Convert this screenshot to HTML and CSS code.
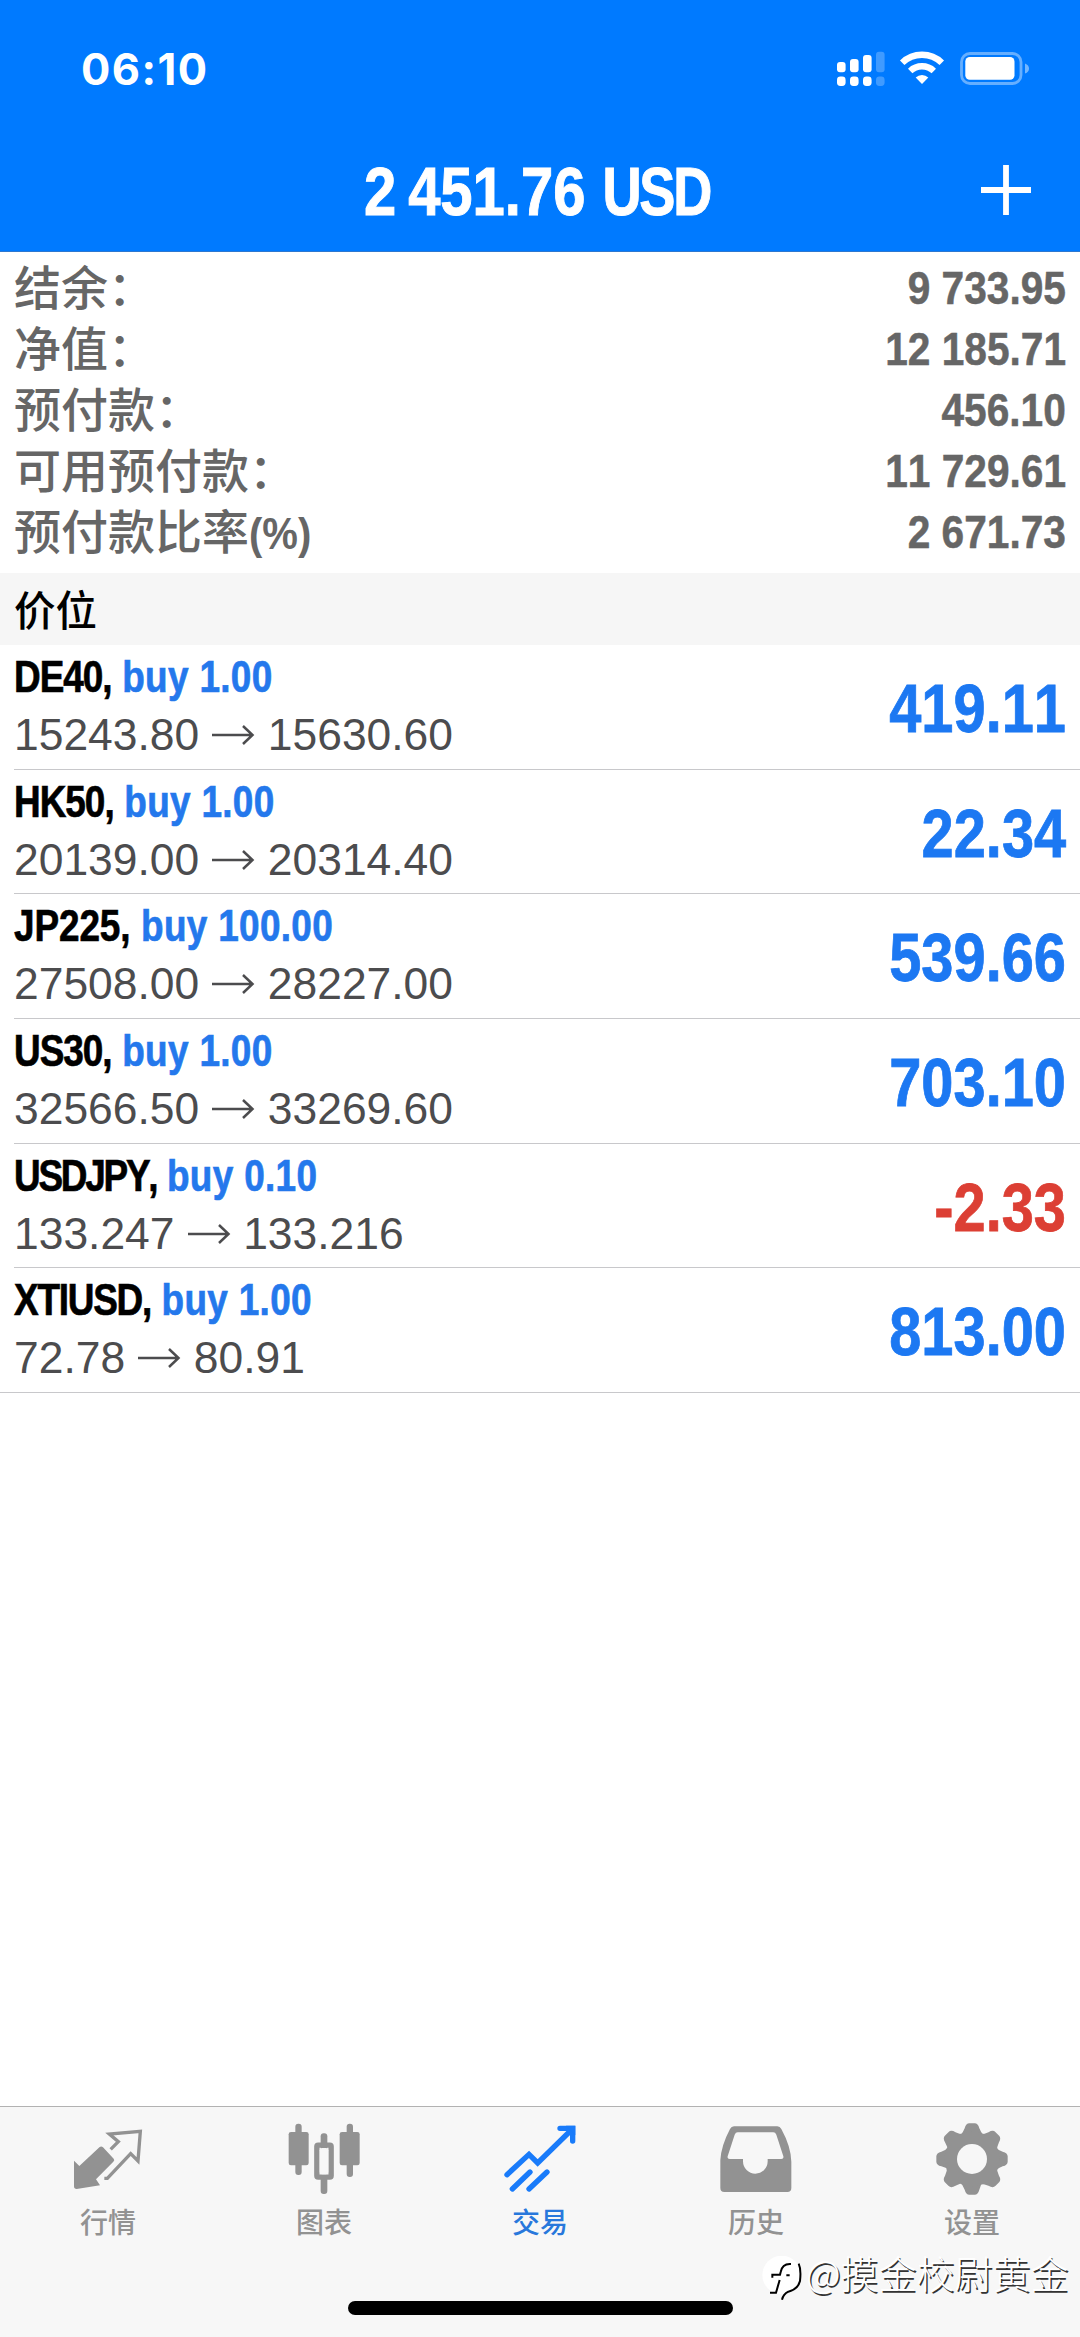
FILE: index.html
```html
<!DOCTYPE html>
<html lang="zh-CN">
<head>
<meta charset="utf-8">
<title>交易</title>
<link rel="stylesheet" href="styles.css">
</head>
<body>
<div class="screen">
  <header class="header">
    <div class="status">
      <span class="time">06:10</span>
      <svg class="status-icons" viewBox="836 50 194 38" fill="#fff">
        <rect x="837" y="62" width="8.6" height="10.3" rx="3"/>
        <rect x="850" y="59" width="8.6" height="13.3" rx="3"/>
        <rect x="863" y="55" width="8.6" height="17.3" rx="3"/>
        <rect x="876" y="51.7" width="8.6" height="20.6" rx="3" opacity=".25"/>
        <rect x="837" y="76.5" width="8.6" height="9.5" rx="3.4"/>
        <rect x="850" y="76.5" width="8.6" height="9.5" rx="3.4"/>
        <rect x="863" y="76.5" width="8.6" height="9.5" rx="3.4"/>
        <rect x="876" y="76.5" width="8.6" height="9.5" rx="3.4" opacity=".25"/>
        <path d="M902.2 62.8a28.5 28.5 0 0 1 39.6 0M910.2 71a17.2 17.2 0 0 1 23.6 0" fill="none" stroke="#fff" stroke-width="6.4"/>
        <path d="M922 84l-6.300-6.500a9 9 0 0 1 12.600 0z"/>
        <rect x="961.500" y="53.500" width="59.500" height="30" rx="8.500" fill="none" stroke="#fff" stroke-width="2.800" opacity=".4"/>
        <rect x="965.300" y="57" width="49.200" height="22.800" rx="4.500"/>
        <path d="M1025 63.500q4 1.500 4 5t-4 5z" opacity=".45"/>
      </svg>
    </div>
    <div class="titlebar">
      <h1 class="title"><span class="cond">2 451.76 <span class="usd">USD</span></span></h1>
      <svg class="plus" viewBox="0 0 50 50"><path d="M25 0v50M0 25h50" stroke="#fff" stroke-width="5.800"/></svg>
    </div>
  </header>

  <dl class="summary">
    <div class="sum-row"><dt>结余：</dt><dd>9 733.95</dd></div>
    <div class="sum-row"><dt>净值：</dt><dd>12 185.71</dd></div>
    <div class="sum-row"><dt>预付款：</dt><dd>456.10</dd></div>
    <div class="sum-row"><dt>可用预付款：</dt><dd>11 729.61</dd></div>
    <div class="sum-row"><dt>预付款比率<span class="pct">(%)</span></dt><dd>2 671.73</dd></div>
  </dl>

  <h2 class="section">价位</h2>

  <svg width="0" height="0" class="defs"><symbol id="arrow" viewBox="0 0 44 24"><path d="M1 12h40M32 3l9.500 9-9.500 9" fill="none" stroke="#4c4c4e" stroke-width="2.500"/></symbol></svg>
  <ul class="positions">
    <li class="pos">
      <div class="info"><p class="name"><b>DE40,</b> buy 1.00</p><p class="prices">15243.80 <svg class="arr"><use href="#arrow"/></svg> 15630.60</p></div>
      <span class="pl">419.11</span>
    </li>
    <li class="pos">
      <div class="info"><p class="name"><b>HK50,</b> buy 1.00</p><p class="prices">20139.00 <svg class="arr"><use href="#arrow"/></svg> 20314.40</p></div>
      <span class="pl">22.34</span>
    </li>
    <li class="pos">
      <div class="info"><p class="name"><b class="loose">JP225,</b> buy 100.00</p><p class="prices">27508.00 <svg class="arr"><use href="#arrow"/></svg> 28227.00</p></div>
      <span class="pl">539.66</span>
    </li>
    <li class="pos">
      <div class="info"><p class="name"><b>US30,</b> buy 1.00</p><p class="prices">32566.50 <svg class="arr"><use href="#arrow"/></svg> 33269.60</p></div>
      <span class="pl">703.10</span>
    </li>
    <li class="pos">
      <div class="info"><p class="name"><b class="tight">USDJPY,</b> buy 0.10</p><p class="prices">133.247 <svg class="arr"><use href="#arrow"/></svg> 133.216</p></div>
      <span class="pl loss">-2.33</span>
    </li>
    <li class="pos">
      <div class="info"><p class="name"><b class="snug">XTIUSD,</b> buy 1.00</p><p class="prices">72.78 <svg class="arr"><use href="#arrow"/></svg> 80.91</p></div>
      <span class="pl">813.00</span>
    </li>
  </ul>

  <nav class="tabs">
    <a class="tab">
      <svg viewBox="216 96 216 222">
        <path d="M222 212L238 228L299 171Q304 168 309 172L341 206Q345 211 340 215L288 268L300 286L230 297Q222 297 222 289z" fill="#929292"/>
        <path d="M332 178L355 155L328 132L421 124L414 213L392 191L322 265H313" fill="none" stroke="#929292" stroke-width="10"/>
      </svg>
      <span>行情</span>
    </a>
    <a class="tab">
      <svg viewBox="865 96 216 222" fill="#929292">
        <rect x="887" y="101" width="19" height="154" rx="9"/><rect x="867" y="126" width="60" height="100" rx="7"/>
        <rect x="1041" y="101" width="19" height="160" rx="9"/><rect x="1020" y="126" width="60" height="100" rx="7"/>
        <rect x="963" y="130" width="20" height="50" rx="9"/><rect x="963" y="255" width="20" height="57" rx="9"/>
        <rect x="951.500" y="165.500" width="43" height="96" rx="4" fill="none" stroke="#929292" stroke-width="16"/>
        <rect x="960" y="174" width="26" height="79" rx="7" fill="#f7f7f7"/>
      </svg>
      <span>图表</span>
    </a>
    <a class="tab active">
      <svg viewBox="314 96 216 222" fill="none" stroke="#197bfa" stroke-width="16" stroke-linecap="round" stroke-linejoin="miter">
        <path d="M323 254L389 193L415 219L516 120"/>
        <path d="M482 115H520V153"/>
        <path d="M500 107H528V136z" fill="#197bfa" stroke="none"/>
        <path d="M339 297L392 246M389 297L443 246"/>
      </svg>
      <span>交易</span>
    </a>
    <a class="tab">
      <svg viewBox="962 96 216 222">
        <path fill="#929292" fill-rule="evenodd" d="M1004 109H1134Q1142 109 1146 117Q1175 170 1176 215V294Q1176 306 1164 306H975Q963 306 963 294V210Q966 166 992 117Q996 109 1004 109zM1015 127Q1009 127 1006 134L985 199Q983 207 991 207H1031V214A37 37 0 0 0 1105 214V207H1146Q1154 207 1152 199L1131 134Q1128 127 1122 127z"/>
      </svg>
      <span>历史</span>
    </a>
    <a class="tab">
      <svg viewBox="589 97 216 222">
        <g fill="#929292" transform="translate(697 208)">
          <path id="tooth" d="M-36 -70Q-27 -78 -22 -92Q-18 -107 -8 -107H8Q18 -107 22 -92Q27 -78 36 -70L30 70Q27 78 22 92Q18 107 8 107H-8Q-18 107 -22 92Q-27 78 -36 70z"/>
          <use href="#tooth" transform="rotate(45)"/><use href="#tooth" transform="rotate(90)"/><use href="#tooth" transform="rotate(135)"/>
          <circle r="82"/>
          <circle r="45" fill="#f7f7f7"/>
        </g>
      </svg>
      <span>设置</span>
    </a>
  </nav>
  <div class="home"></div>

  <div class="watermark">
    <svg viewBox="66 500 120 132">
      <circle cx="125" cy="557" r="58" fill="#fff"/>
      <path d="M153 524Q127 522 122 548L120 556H97V565M119 572L108 610H90M176 523Q184 540 180 575Q174 600 145 607Q130 614 126 631M139 558H149" fill="none" stroke="#000" stroke-width="6"/>
    </svg>
    <span>@摸金校尉黄金</span>
  </div>
</div>
</body>
</html>
```
FILE: styles.css
```css
* { box-sizing: border-box; margin: 0; padding: 0; }
body { background: #fff; }
.screen {
  position: relative;
  display: flex;
  flex-direction: column;
  width: 1080px;
  height: 2337px;
  overflow: hidden;
  background: #fff;
  font-family: "Liberation Sans", "Noto Sans CJK SC", sans-serif;
  font-kerning: none;
}

.header { flex: none; height: 252px; background: #007aff; color: #fff; border-bottom: 1px solid #2d78d0; }
.status { display: flex; justify-content: space-between; height: 138px; padding: 50px 50px 0 81px; }
.time { font: 700 43.500px/38px Inter, sans-serif; letter-spacing: 1.500px; }
.status-icons { width: 194px; height: 38px; }
.titlebar { display: grid; grid-template-columns: 1fr auto 1fr; align-items: center; height: 104px; padding: 0 49px; }
.title { grid-column: 2; width: 352px; height: 104px; font-size: 69px; line-height: 104px; padding-top: 2px; white-space: pre; }
.cond { display: inline-block; word-spacing: -5px; transform: scaleX(.84); transform-origin: 0 50%; -webkit-text-stroke: 1px currentColor; }
.usd { display: inline-block; margin-left: 6px; letter-spacing: -3px; transform: scaleX(.935); transform-origin: 0 50%; }
.plus { width: 50px; height: 50px; justify-self: end; }

.summary { flex: none; height: 321px; padding: 3px 14px 0 14px; color: #666; }
.sum-row { display: flex; justify-content: space-between; height: 61px; line-height: 61px; }
dt { font: 500 47px/59px "Noto Sans CJK SC", sans-serif; }
.pct { display: inline-block; font: 700 44px/59px "Liberation Sans", sans-serif; transform: scaleX(.91); transform-origin: 0 50%; }
dd { font-size: 47px; font-weight: 700; transform: scaleX(.865); transform-origin: 100% 50%; padding-top: 2px; -webkit-text-stroke: .5px currentColor; }

.section { flex: none; height: 72px; padding-left: 14px; background: #f6f6f6; font: 500 41.500px/70px "Noto Sans CJK SC", sans-serif; color: #000; }
.defs { position: absolute; }

.positions { list-style: none; }
.pos { display: flex; justify-content: space-between; height: 124.670px; margin-left: 14px; padding-right: 14px; border-bottom: 1.500px solid #c8c8cb; }
.pos:last-child { margin-left: 0; padding-left: 14px; }
.name { font-size: 45px; font-weight: 700; line-height: 52px; padding-top: 6px; height: 64px; color: #2478ec; white-space: nowrap; letter-spacing: .4px; transform: scaleX(.82); transform-origin: 0 50%; -webkit-text-stroke: .7px currentColor; }
.name b { color: #000; letter-spacing: -1.200px; }
.name .tight { letter-spacing: -2.700px; }
.name .snug { letter-spacing: -1.500px; }
.name .loose { letter-spacing: -.1px; }
.prices { font-size: 44.400px; line-height: 52px; color: #4c4c4e; white-space: nowrap; }
.arr { width: 44px; height: 24px; vertical-align: 3px; }
.pl { font-size: 68px; font-weight: 700; line-height: 127px; color: #1c78f2; transform: scaleX(.85); transform-origin: 100% 50%; -webkit-text-stroke: .8px currentColor; }
.loss { color: #dc3f34; }

.tabs { display: grid; grid-template-columns: repeat(5, 1fr); height: 231px; margin-top: auto; padding-top: 15px; border-top: 1.500px solid #b2b2b2; background: #f7f7f7; }
.tab { display: flex; flex-direction: column; align-items: center; color: #929292; font: 500 28px/40px "Noto Sans CJK SC", sans-serif; }
.tab svg { width: 72px; height: 74px; margin-bottom: 5px; }
.active { color: #2878dc; }

.home { position: absolute; left: 348px; bottom: 22px; width: 385px; height: 14px; border-radius: 7px; background: #000; }
.watermark { position: absolute; left: 762px; top: 2256px; display: flex; align-items: flex-start; gap: 4px; color: #fff; font: 300 38px/32px "Noto Sans CJK SC", sans-serif; text-shadow: 1.500px 1.500px 0 #333; white-space: nowrap; }
.watermark svg { width: 40px; height: 44px; }
```
